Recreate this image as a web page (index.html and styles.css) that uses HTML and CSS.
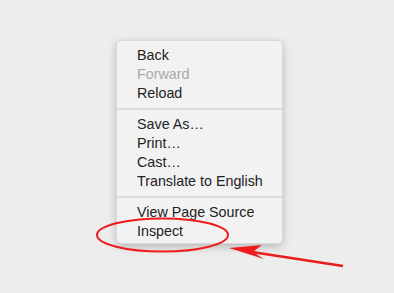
FILE: index.html
```html
<html>
	<head>
        <title>Context menu</title>
        <meta charset="utf-8">
        <link rel="stylesheet" href="styles.css">
	</head>
	<body>
        <div id="menu">
            <div class="item">Back</div>
            <div class="item disabled">Forward</div>
            <div class="item">Reload</div>
            <div class="sep"></div>
            <div class="item">Save As…</div>
            <div class="item">Print…</div>
            <div class="item">Cast…</div>
            <div class="item">Translate to English</div>
            <div class="sep"></div>
            <div class="item">View Page Source</div>
            <div class="item">Inspect</div>
        </div>
        <!-- anotacao em vermelho por cima do menu -->
        <svg id="marca" width="394" height="293" viewBox="0 0 394 293">
            <ellipse cx="162.5" cy="235" rx="65.5" ry="16.5" fill="none" stroke="#ee1c1c" stroke-width="2"/>
            <path d="M343 266 L252 252" stroke="#ee1c1c" stroke-width="2.5" fill="none"/>
            <path d="M229 248 L262 245 L253 252 L264 259 Z" fill="#ee1c1c"/>
        </svg>
	</body>
</html>
```

FILE: styles.css
```css
body{
    margin: 0;
    width: 394px;
    height: 293px;
    background-color: #ededed;
    font-family: "Liberation Sans", Arial, sans-serif;
    overflow: hidden;
}
#menu{
    width: 167px;
    margin: 40px 0 0 116px;
    padding: 5px 0 4px 0;
    background-color: #f2f2f2;
    border: 1px solid rgba(0, 0, 0, 0.1);
    border-radius: 5px;
    box-shadow: 0 3px 9px rgba(0, 0, 0, 0.22);
    box-sizing: border-box;
    height: 204px;
}
.item{
    height: 19px;
    line-height: 19px;
    padding-left: 20px;
    font-size: 14.3px;
    color: #222222;
    white-space: nowrap;
}
.disabled{
    color: #a9a9a9;
}
.sep{
    height: 2px;
    margin: 5px 0 5px 0;
    background-color: #dcdcdc;
}
#marca{
    position: absolute;
    left: 0;
    top: 0;
}
```
